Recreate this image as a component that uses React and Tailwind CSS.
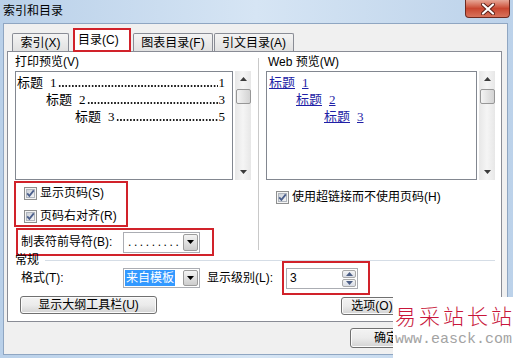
import React from "react";

const UI = "font-['Liberation_Sans','Noto_Sans_CJK_SC',sans-serif]";
const SERIF = "font-['Liberation_Serif','Noto_Sans_CJK_SC',serif]";

function Check() {
  return (
    <svg width="13" height="13" viewBox="0 0 13 13" className="shrink-0">
      <defs>
        <linearGradient id="cbfill" x1="0" y1="0" x2="1" y2="1">
          <stop offset="0" stopColor="#c9ced6" />
          <stop offset="1" stopColor="#f7f7f7" />
        </linearGradient>
      </defs>
      <rect x="0.5" y="0.5" width="12" height="12" fill="#f4f4f4" stroke="#8e8f8f" />
      <rect x="2.5" y="2.5" width="8" height="8" fill="url(#cbfill)" stroke="#b0b6be" />
      <path d="M3.2 6.3 L5.4 8.8 L9.8 3.4" fill="none" stroke="#4b5f8c" strokeWidth="1.8" />
    </svg>
  );
}

function Arrow({ up, color = "#3c3c3c" }) {
  return (
    <svg width="7" height="4" viewBox="0 0 7 4">
      <path d={up ? "M3.5 0L7 4H0z" : "M0 0h7L3.5 4z"} fill={color} />
    </svg>
  );
}

function ScrollBar() {
  return (
    <div className="w-[16px] h-full flex flex-col items-center bg-gradient-to-r from-[#e7e7e7] via-[#f5f5f5] to-[#e7e7e7]">
      <div className="h-[16px] flex items-center justify-center">
        <Arrow up />
      </div>
      <div className="mt-[2px] w-[15px] h-[15px] rounded-[2px] border border-[#979797] bg-gradient-to-r from-[#f4f4f4] to-[#d3d3d3]" />
      <div className="flex-1" />
      <div className="h-[16px] flex items-center justify-center">
        <Arrow />
      </div>
    </div>
  );
}

function Combo({ width, children }) {
  return (
    <div className={`${width} h-[21px] border border-[#abadb3] bg-white flex items-stretch shrink-0`}>
      <div className="flex-1 flex items-center pl-[1px] overflow-hidden">{children}</div>
      <div className="w-[15px] m-[1px] border border-[#9c9c9c] rounded-[2px] bg-gradient-to-b from-[#f4f4f4] to-[#cdcdcd] flex items-center justify-center">
        <Arrow color="#000" />
      </div>
    </div>
  );
}

function Btn({ className, children }) {
  return (
    <div
      className={`${className} shrink-0 border border-[#707070] rounded-[3px] bg-gradient-to-b from-[#f3f3f3] via-[#ebebeb] to-[#d3d3d3] shadow-[inset_0_0_0_1px_#fbfbfb] flex items-center justify-center`}
    >
      {children}
    </div>
  );
}

// leader dots drawn as a repeating background so they always meet the page number
function TocRow({ indent, n, page }) {
  return (
    <div className={`flex items-baseline ${indent}`}>
      <span className="whitespace-nowrap">标题</span>
      <span className="ml-[7px]">{n}</span>
      <span className="flex-1 self-end h-[2px] mb-[4px] mx-[1px] bg-[radial-gradient(circle,#000_0.6px,transparent_1px)] bg-[length:3.3px_2px] bg-repeat-x" />
      <span>{page}</span>
    </div>
  );
}

function WebRow({ indent, n }) {
  return (
    <div className={indent}>
      <span className="underline text-[#1f1fa6] whitespace-nowrap">
        标题<span className="ml-[7px]">{n}</span>
      </span>
    </div>
  );
}

export default function App() {
  return (
    <div
      className={`w-[513px] h-[358px] overflow-hidden relative flex flex-col bg-gradient-to-r from-[#b9d0e9] via-[#d6e5f4] to-[#bcd2ea] ${UI} text-[12px] leading-[14px] text-black`}
    >
      {/* title bar */}
      <div className="h-[23px] shrink-0 flex items-start">
        <span className="mt-[4px] ml-[3px]">索引和目录</span>
        <div className="ml-auto mr-[3px] w-[45px] h-[18px] rounded-b-[4px] border border-t-0 border-[#6d2a20] bg-gradient-to-b from-[#e6a797] via-[#c84630] to-[#d8735c] flex items-center justify-center">
          <svg width="14" height="12" viewBox="0 0 14 12">
            <path d="M2 1.5 L12 10.5 M12 1.5 L2 10.5" stroke="#5a1f17" strokeWidth="4" strokeLinecap="round" />
            <path d="M2 1.5 L12 10.5 M12 1.5 L2 10.5" stroke="#ffffff" strokeWidth="2.2" strokeLinecap="round" />
          </svg>
        </div>
      </div>

      {/* body */}
      <div className="flex-1 flex pl-[3px] pr-[5px] pb-[3px]">
        <div className="flex-1 border border-[#8fa6c2] bg-[#f0f0f0] flex flex-col pt-[4px] pl-[3px] pr-[5px]">
          {/* tabs */}
          <div className="h-[23px] flex items-end ml-[5px] relative z-10">
            <div className="w-[57px] h-[18px] border border-b-0 border-[#898c95] rounded-t-[2px] bg-gradient-to-b from-[#f4f4f4] to-[#e1e1e1] flex items-center justify-center">
              索引(X)
            </div>
            <div className="ml-[4px] w-[58px] h-[24px] -mb-[1px] border-2 border-[#d1222a] bg-white flex items-center pl-[3px]">
              目录(C)
            </div>
            <div className="ml-[2px] w-[80px] h-[18px] border border-b-0 border-[#898c95] rounded-t-[2px] bg-gradient-to-b from-[#f4f4f4] to-[#e1e1e1] flex items-center justify-center">
              图表目录(F)
            </div>
            <div className="ml-[1px] w-[80px] h-[18px] border border-b-0 border-[#898c95] rounded-t-[2px] bg-gradient-to-b from-[#f4f4f4] to-[#e1e1e1] flex items-center justify-center">
              引文目录(A)
            </div>
          </div>

          {/* panel */}
          <div className="h-[271px] border border-[#898c95] bg-white flex flex-col">
            <div className="h-[204px] flex">
              {/* print preview column */}
              <div className="w-[250px] pl-[7px] pt-[3px] flex flex-col">
                <span>打印预览(V)</span>
                <div className="mt-[2px] h-[109px] flex gap-[2px]">
                  <div className={`w-[218px] border border-[#828790] pt-[2px] pl-[1px] pr-[7px] ${SERIF} text-[13px] leading-[17px]`}>
                    <TocRow indent="" n="1" page="1" />
                    <TocRow indent="pl-[29px]" n="2" page="3" />
                    <TocRow indent="pl-[58px]" n="3" page="5" />
                  </div>
                  <ScrollBar />
                </div>
                <div className="mt-[1px] -ml-[1px] w-[114px] h-[46px] border-2 border-[#d1222a] pl-[8px] pt-[3px] flex flex-col gap-[9px]">
                  <div className="flex items-center gap-[3px] h-[14px]">
                    <Check />
                    <span>显示页码(S)</span>
                  </div>
                  <div className="flex items-center gap-[3px] h-[14px]">
                    <Check />
                    <span>页码右对齐(R)</span>
                  </div>
                </div>
                <div className="mt-[1px] ml-[1px] w-[198px] h-[28px] border-2 border-[#d1222a] pl-[3px] flex items-center">
                  <span className="w-[102px]">制表符前导符(B):</span>
                  <Combo width="w-[77px]">
                    <span className="pl-[3px] tracking-[2.6px] text-[12px]">.........</span>
                  </Combo>
                </div>
              </div>

              <div className="w-px my-[6px] bg-[#c9c9c9]" />

              {/* web preview column */}
              <div className="flex-1 pt-[3px] flex flex-col">
                <span className="ml-[9px]">Web 预览(W)</span>
                <div className="mt-[2px] ml-[7px] h-[109px] flex gap-[2px]">
                  <div className={`w-[211px] border border-[#828790] pt-[2px] pl-[2px] ${SERIF} text-[13px] leading-[17px]`}>
                    <WebRow indent="" n="1" />
                    <WebRow indent="pl-[27px]" n="2" />
                    <WebRow indent="pl-[55px]" n="3" />
                  </div>
                  <ScrollBar />
                </div>
                <div className="mt-[10px] ml-[17px] flex items-center gap-[3px] h-[14px]">
                  <Check />
                  <span>使用超链接而不使用页码(H)</span>
                </div>
              </div>
            </div>

            {/* general group */}
            <div className="-mt-[3px] h-[14px] pl-[7px] flex items-center">
              <span>常规</span>
              <div className="flex-1 h-px bg-[#d5dde6] ml-[6px] mr-[6px]" />
            </div>
            <div className="mt-[1px] h-[20px] pl-[13px] flex items-center">
              <span className="w-[102px]">格式(T):</span>
              <Combo width="w-[77px] !h-[20px]">
                <span className="bg-[#3399ff] text-white px-[1px] leading-[16px]">来自模板</span>
              </Combo>
              <span className="ml-[7px] w-[75px] whitespace-nowrap">显示级别(L):</span>
              <div className="w-[88px] h-[34px] shrink-0 border-2 border-[#d1222a] pl-[2px] flex items-center">
                <div className="w-[72px] h-[21px] border border-[#abadb3] bg-white flex items-stretch">
                  <span className="flex-1 pl-[3px] flex items-center">3</span>
                  <div className="w-[14px] mr-[1px] my-[1px] flex flex-col gap-px">
                    <div className="flex-1 border border-[#a9a9a9] rounded-[2px] bg-gradient-to-b from-[#f4f4f4] to-[#d9dde6] flex items-center justify-center">
                      <Arrow up color="#4d5f86" />
                    </div>
                    <div className="flex-1 border border-[#a9a9a9] rounded-[2px] bg-gradient-to-b from-[#f4f4f4] to-[#d9dde6] flex items-center justify-center">
                      <Arrow color="#4d5f86" />
                    </div>
                  </div>
                </div>
              </div>
            </div>
            <div className="mt-[8px] pl-[12px] pr-[7px] flex items-start">
              <Btn className="w-[137px] h-[18px]">显示大纲工具栏(U)</Btn>
              <Btn className="ml-auto mt-[1px] w-[72px] h-[18px]">选项(O)...</Btn>
              <Btn className="ml-[9px] mt-[1px] w-[72px] h-[18px]">修改(M)...</Btn>
            </div>
          </div>

          {/* dialog buttons */}
          <div className="mt-[6px] flex justify-end gap-[8px]">
            <Btn className="w-[72px] h-[20px]">确定</Btn>
            <Btn className="w-[72px] h-[20px]">取消</Btn>
          </div>
        </div>
      </div>

      {/* watermark */}
      <div className="absolute left-[393px] top-[297px] w-[120px] h-[61px] bg-white flex flex-col">
        <span className="mt-[5px] ml-[2px] text-[21px] leading-[26px] tracking-[3px] text-[#c8163a] font-['Noto_Sans_CJK_SC',serif] font-light whitespace-nowrap">
          易采站长站
        </span>
        <span className="mt-[5px] ml-[2px] text-[15px] leading-[14px] text-[#a3a3a3] font-['Liberation_Mono',monospace] whitespace-nowrap">
          www.easck.com
        </span>
      </div>
    </div>
  );
}
